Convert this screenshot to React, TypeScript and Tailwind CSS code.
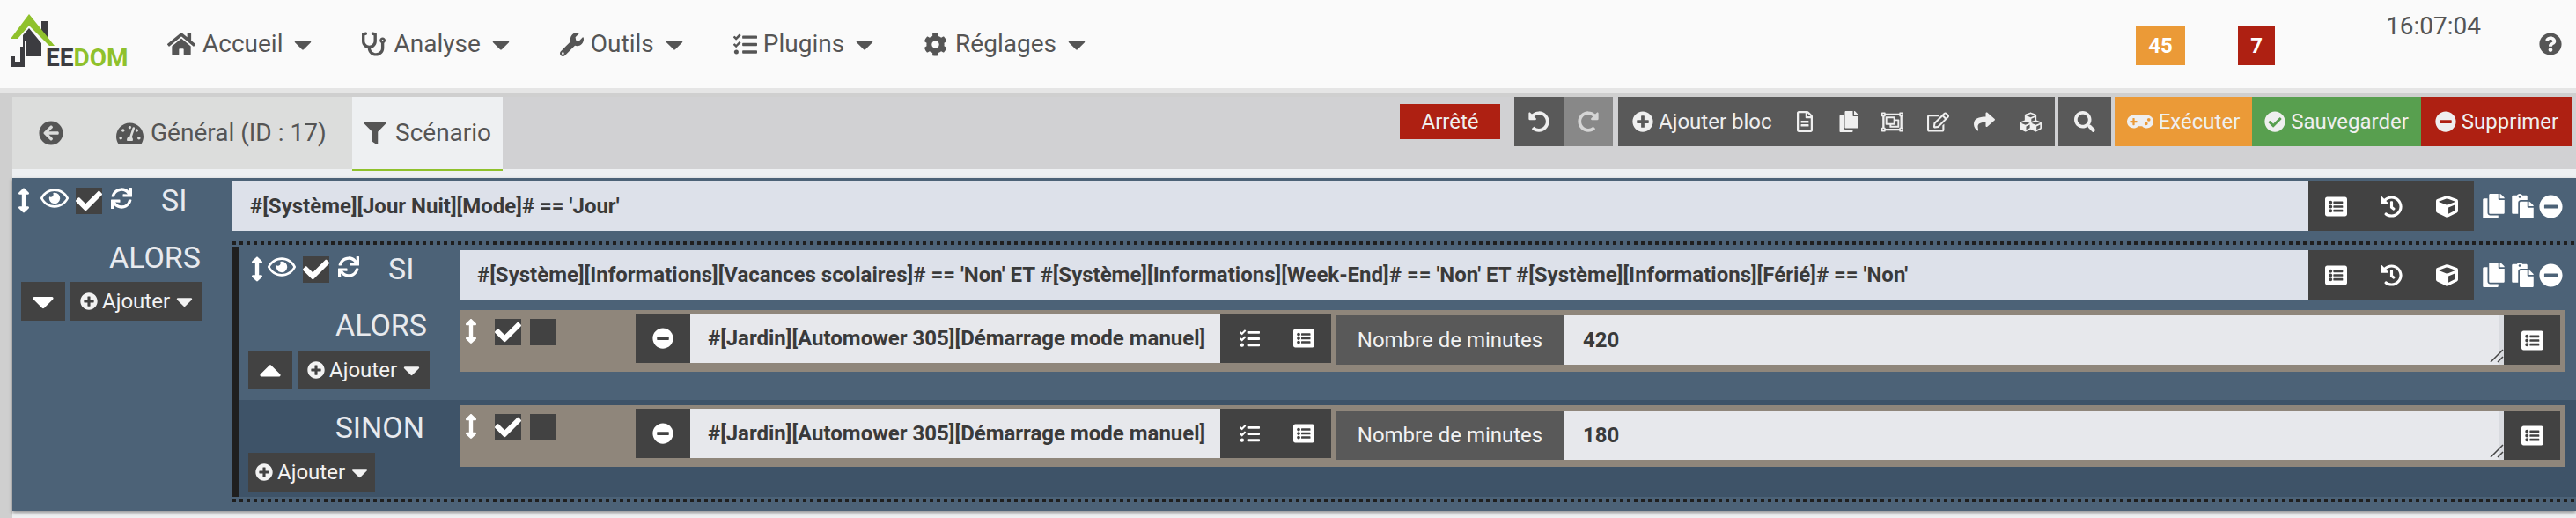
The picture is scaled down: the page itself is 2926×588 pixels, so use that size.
import type { ReactNode } from 'react'
import {
  FaArrowCircleLeft, FaArrowsAltV, FaCaretDown, FaCaretUp, FaCheck, FaCheckCircle, FaCog, FaCopy, FaCube, FaCubes,
  FaFilter, FaGamepad, FaHistory, FaHome, FaListAlt, FaMinusCircle, FaPaste, FaPlusCircle, FaQuestionCircle, FaRedoAlt,
  FaRegEdit, FaRegEye, FaRegFileAlt, FaRegObjectGroup, FaSearch, FaShare, FaStethoscope, FaSync,
  FaTachometerAlt, FaTasks, FaUndoAlt, FaWrench,
} from 'react-icons/fa'

function Logo() {
  return (
    <div className="flex items-end w-[190px] pl-[12px] pt-[2px] shrink-0 self-start mt-[12px]">
      <svg width="50" height="62" viewBox="12 12 50 62" className="shrink-0">
        <path d="M47 22h7v19l-7-8z" fill="#3c3c40" />
        <path d="M33 30l14 17v15H29v-8h-3V38z" fill="#3c3c40" />
        <path d="M12 62h5v6h6V51h5v23H12z" fill="#3c3c40" />
        <path d="M28 44h2v15h-2z" fill="#fafafa" />
        <path d="M33 14L62 50h-6L33 27 20 42h-8z" fill="#8fc12c" />
      </svg>
      <span className="font-['Roboto',sans-serif] font-bold text-[28px] leading-[20px] -ml-[10px] text-[#8fc12c]">
        <span className="text-[#3c3c40]">EE</span>DOM
      </span>
    </div>
  )
}

function NavItem({ icon, iconBox, label }: { icon: ReactNode; iconBox: string; label: string }) {
  return (
    <div className="flex items-center text-[28px] text-[#555555]">
      <div className={`shrink-0 ${iconBox}`}>{icon}</div>
      <span>{label}</span>
      <FaCaretDown size={32} className="ml-[13px] w-[20px]" />
    </div>
  )
}

function ToolButton({ children, className }: { children: ReactNode; className: string }) {
  return <div className={`h-[56px] flex items-center justify-center text-[#efefef] shrink-0 whitespace-nowrap ${className}`}>{children}</div>
}

function DottedLine() {
  return <div className="h-[4px] bg-[repeating-linear-gradient(90deg,#1f1f1f_0,#1f1f1f_4px,transparent_4px,transparent_8px)]" />
}

function Check() {
  return (
    <div className="w-[30px] h-[30px] bg-[#424242] flex items-center justify-center shrink-0">
      <FaCheck size={30} className="text-white shrink-0" />
    </div>
  )
}

function ConditionRow({ text, arrowClass }: { text: string; arrowClass: string }) {
  return (
    <div className="flex pt-[4px]">
      <div className="w-[250px] shrink-0 flex items-start pt-[7px] text-white">
        <div className={`w-[32px] shrink-0 ${arrowClass}`}>
          <FaArrowsAltV size={29} className="w-[14px]" />
        </div>
        <FaRegEye size={32} className="shrink-0 -mt-[4px]" />
        <div className="ml-[8px]"><Check /></div>
        <FaSync size={24} className="ml-[10px] shrink-0" />
        <span className="ml-[33px] -mt-[6px] text-[34px] leading-[40px] text-[#e8eaee]">SI</span>
      </div>
      <div className="flex-1 h-[56px] bg-[#dde1ea] flex items-center pl-[20px] font-bold text-[24px] text-[#3a3a3a] whitespace-nowrap">{text}</div>
      <div className="w-[188px] h-[56px] bg-[#424242] flex items-center text-white shrink-0">
        <div className="w-[62px] flex justify-center"><FaListAlt size={25} /></div>
        <div className="w-[64px] flex justify-center"><FaHistory size={25} /></div>
        <div className="w-[62px] flex justify-center"><FaCube size={25} /></div>
      </div>
      <div className="w-[116px] h-[56px] shrink-0 flex items-center pl-[10px] gap-[8px] text-white">
        <FaCopy size={28} className="w-[25px]" />
        <FaPaste size={28} className="w-[25px]" />
        <FaMinusCircle size={27} className="-ml-[2px]" />
      </div>
    </div>
  )
}

function ActionRow({ value }: { value: string }) {
  return (
    <div className="bg-[#8f867b] h-[70px] flex px-[6px] text-white">
      <div className="w-[194px] shrink-0 flex items-start pt-[10px]">
        <FaArrowsAltV size={28} className="w-[14px] shrink-0" />
        <div className="ml-[20px]"><Check /></div>
        <div className="ml-[10px] w-[30px] h-[30px] bg-[#424242]" />
      </div>
      <div className="h-[56px] mt-[4px] w-[62px] bg-[#424242] flex items-center justify-center shrink-0">
        <FaMinusCircle size={24} />
      </div>
      <div className="h-[56px] mt-[4px] w-[602px] bg-[#e7e8ec] flex items-center pl-[20px] font-bold text-[24px] text-[#3a3a3a] shrink-0 whitespace-nowrap">
        #[Jardin][Automower 305][Démarrage mode manuel]
      </div>
      <div className="h-[56px] mt-[4px] w-[126px] bg-[#424242] flex items-center shrink-0">
        <div className="w-[45px] flex justify-end"><FaTasks size={23} /></div>
        <div className="w-[81px] pl-[38px]"><FaListAlt size={24} /></div>
      </div>
      <div className="h-[56px] mt-[6px] ml-[6px] w-[258px] bg-[#595959] flex items-center justify-center text-[24px] text-[#f2f2f2] shrink-0 whitespace-nowrap">
        Nombre de minutes
      </div>
      <div className="relative h-[56px] mt-[6px] flex-1 bg-[#e7e8ec] border-r-[6px] border-[#d9dbe0] flex items-center pl-[22px] font-bold text-[24px] text-[#3a3a3a]">
        {value}
        <svg width="16" height="16" viewBox="0 0 16 16" className="absolute right-[-6px] bottom-[2px]">
          <path d="M1 15L15 1M9 15l6-6" stroke="#444444" strokeWidth="1.5" />
        </svg>
      </div>
      <div className="h-[56px] mt-[6px] w-[64px] bg-[#424242] flex items-center justify-center shrink-0">
        <FaListAlt size={25} />
      </div>
    </div>
  )
}

function Ajouter({ className }: { className: string }) {
  return (
    <div className={`h-[44px] bg-[#424242] flex items-center justify-center text-[#f2f2f2] text-[24px] whitespace-nowrap ${className}`}>
      <FaPlusCircle size={20} />
      <span className="ml-[5px]">Ajouter</span>
      <FaCaretDown size={30} className="ml-[7px] w-[19px]" />
    </div>
  )
}

function SquareArrow({ up }: { up?: boolean }) {
  return (
    <div className="w-[50px] h-[44px] bg-[#424242] flex items-center justify-center text-white">
      {up ? <FaCaretUp size={40} /> : <FaCaretDown size={40} />}
    </div>
  )
}

export default function App() {
  return (
    <div className="w-[2926px] h-[588px] overflow-hidden bg-[#cfcfcf] font-['Roboto',sans-serif]">
      <nav className="h-[106px] bg-[#fafafa] border-b-[6px] border-[#e5e5e5] flex items-center">
        <Logo />
        <div className="flex items-center gap-[57px]">
          <NavItem icon={<FaHome size={30} className="w-[32px]" />} iconBox="w-[40px]" label="Accueil" />
          <NavItem icon={<FaStethoscope size={28} className="w-[27px]" />} iconBox="w-[36px]" label="Analyse" />
          <NavItem icon={<FaWrench size={27} />} iconBox="w-[35px]" label="Outils" />
          <NavItem icon={<FaTasks size={27} />} iconBox="w-[34px]" label="Plugins" />
          <NavItem icon={<FaCog size={27} />} iconBox="w-[36px]" label="Réglages" />
        </div>
        <div className="ml-auto flex items-start self-start mt-[30px] text-white font-bold text-[24px]">
          <div className="w-[56px] h-[44px] bg-[#eb9a37] flex items-center justify-center">45</div>
          <div className="w-[42px] h-[44px] ml-[60px] bg-[#ae2012] flex items-center justify-center">7</div>
          <div className="ml-[126px] -mt-[16px] text-[28px] leading-[32px] font-normal text-[#555555]">16:07:04</div>
          <FaQuestionCircle size={26} className="ml-[66px] mt-[7px] mr-[16px] text-[#555555]" />
        </div>
      </nav>

      <div className="pt-[4px] pl-[14px]">
        <div className="h-[84px] flex items-start bg-[#d1d1d3] border-b-2 border-[#eef0f2]">
          <div className="flex h-[82px] items-center w-[386px] bg-[#dcdddc] text-[#555555] text-[28px]">
            <FaArrowCircleLeft size={28} className="ml-[30px]" />
            <FaTachometerAlt size={31} className="ml-[60px]" />
            <span className="ml-[8px]">Général (ID : 17)</span>
          </div>
          <div className="h-[84px] w-[171px] bg-[#eef0f2] border-b-2 border-[#8fc12c] flex items-center pl-[13px] text-[#555555] text-[28px]">
            <FaFilter size={26} />
            <span className="ml-[10px]">Scénario</span>
          </div>
          <div className="ml-auto flex items-start pr-[4px] text-[24px]">
            <div className="w-[114px] h-[40px] mt-[8px] bg-[#ae2012] text-[#efefef] flex items-center justify-center">Arrêté</div>
            <ToolButton className="w-[56px] ml-[16px] bg-[#595959]"><FaUndoAlt size={24} /></ToolButton>
            <ToolButton className="w-[56px] bg-[#888888]"><FaRedoAlt size={24} className="text-[#d5d5d5]" /></ToolButton>
            <ToolButton className="w-[496px] ml-[6px] bg-[#595959] !justify-start pl-[16px]">
              <FaPlusCircle size={24} />
              <span className="ml-[6px]">Ajouter bloc</span>
              <div className="ml-[11px] w-[52px] flex justify-center"><FaRegFileAlt size={24} /></div>
              <div className="w-[49px] flex justify-center"><FaCopy size={24} /></div>
              <div className="w-[50px] flex justify-center"><FaRegObjectGroup size={25} /></div>
              <div className="w-[53px] flex justify-center"><FaRegEdit size={25} /></div>
              <div className="w-[53px] flex justify-center"><FaShare size={24} /></div>
              <div className="w-[52px] flex justify-center"><FaCubes size={25} /></div>
            </ToolButton>
            <ToolButton className="w-[60px] ml-[4px] bg-[#595959]"><FaSearch size={24} /></ToolButton>
            <ToolButton className="w-[156px] ml-[4px] bg-[#eb9a37] gap-[6px]"><FaGamepad size={30} />Exécuter</ToolButton>
            <ToolButton className="w-[192px] bg-[#589f4f] gap-[6px]"><FaCheckCircle size={24} />Sauvegarder</ToolButton>
            <ToolButton className="w-[172px] bg-[#ae2012] gap-[6px]"><FaMinusCircle size={24} />Supprimer</ToolButton>
          </div>
        </div>

        <div className="bg-[#eef0f2] pt-[8px] h-[394px]">
          <div className="h-[378px] bg-[#4c6277] shadow-[0_2px_4px_rgba(0,0,0,0.4)]">
            <ConditionRow text="#[Système][Jour Nuit][Mode]# == 'Jour'" arrowClass="pl-[6px]" />
            <div className="flex">
              <div className="w-[250px] shrink-0 pl-[10px]">
                <div className="mt-[10px] h-[40px] leading-[40px] text-right pr-[36px] text-[34px] text-[#e8eaee]">ALORS</div>
                <div className="mt-[8px] flex gap-[6px]">
                  <SquareArrow />
                  <Ajouter className="w-[150px]" />
                </div>
              </div>
              <div className="flex-1 pt-[12px]">
                <DottedLine />
                <div className="mt-[2px] border-l-[8px] border-[#1f1f1f]">
                  <ConditionRow
                    text="#[Système][Informations][Vacances scolaires]# == 'Non' ET #[Système][Informations][Week-End]# == 'Non' ET #[Système][Informations][Férié]# == 'Non'"
                    arrowClass="pl-[13px]"
                  />
                  <div className="flex h-[114px]">
                    <div className="w-[250px] shrink-0 pl-[10px]">
                      <div className="mt-[9px] h-[40px] leading-[40px] text-right pr-[37px] text-[34px] text-[#e8eaee]">ALORS</div>
                      <div className="mt-[9px] flex gap-[6px]">
                        <SquareArrow up />
                        <Ajouter className="w-[150px]" />
                      </div>
                    </div>
                    <div className="flex-1 pt-[12px] pr-[12px]">
                      <ActionRow value="420" />
                    </div>
                  </div>
                  <div className="flex h-[110px] bg-[#3e5368]">
                    <div className="w-[250px] shrink-0 pl-[10px]">
                      <div className="mt-[11px] h-[40px] leading-[40px] text-right pr-[40px] text-[34px] text-[#e8eaee]">SINON</div>
                      <div className="mt-[9px]">
                        <Ajouter className="w-[144px]" />
                      </div>
                    </div>
                    <div className="flex-1 pt-[6px] pr-[12px]">
                      <ActionRow value="180" />
                    </div>
                  </div>
                </div>
                <div className="mt-[2px]"><DottedLine /></div>
              </div>
            </div>
          </div>
        </div>
      </div>
    </div>
  )
}
